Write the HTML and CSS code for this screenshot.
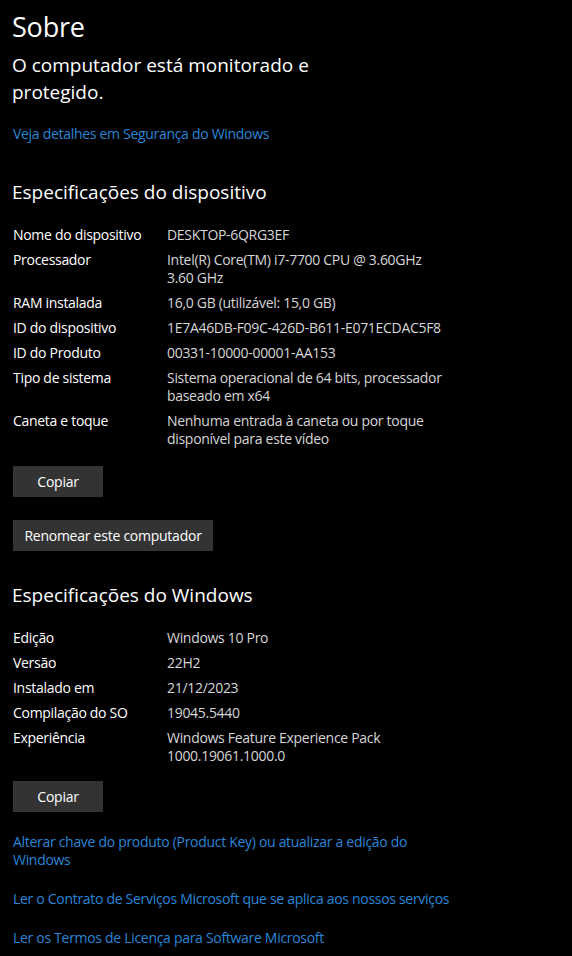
FILE: index.html
```html
<!DOCTYPE html>
<html lang="pt-BR">
<head>
<meta charset="utf-8">
<title>Sobre</title>
<link rel="stylesheet" href="styles.css">
</head>
<body>
<main class="page">
  <h1 class="title">Sobre</h1>
  <p class="status">O computador está monitorado e protegido.</p>
  <a class="link first-link" href="#">Veja detalhes em Segurança do Windows</a>

  <h2 class="section section-device">Especificações do dispositivo</h2>
  <dl class="specs">
    <div class="row"><dt>Nome do dispositivo</dt><dd>DESKTOP-6QRG3EF</dd></div>
    <div class="row"><dt>Processador</dt><dd>Intel(R) Core(TM) i7-7700 CPU @ 3.60GHz<br>3.60 GHz</dd></div>
    <div class="row"><dt>RAM instalada</dt><dd>16,0 GB (utilizável: 15,0 GB)</dd></div>
    <div class="row"><dt>ID do dispositivo</dt><dd>1E7A46DB-F09C-426D-B611-E071ECDAC5F8</dd></div>
    <div class="row"><dt>ID do Produto</dt><dd>00331-10000-00001-AA153</dd></div>
    <div class="row"><dt>Tipo de sistema</dt><dd>Sistema operacional de 64 bits, processador<br>baseado em x64</dd></div>
    <div class="row"><dt>Caneta e toque</dt><dd>Nenhuma entrada à caneta ou por toque<br>disponível para este vídeo</dd></div>
  </dl>
  <button class="btn btn-copy btn-copy-device">Copiar</button>
  <button class="btn btn-rename">Renomear este computador</button>

  <h2 class="section section-windows">Especificações do Windows</h2>
  <dl class="specs">
    <div class="row"><dt>Edição</dt><dd>Windows 10 Pro</dd></div>
    <div class="row"><dt>Versão</dt><dd>22H2</dd></div>
    <div class="row"><dt>Instalado em</dt><dd>21/12/2023</dd></div>
    <div class="row"><dt>Compilação do SO</dt><dd>19045.5440</dd></div>
    <div class="row"><dt>Experiência</dt><dd>Windows Feature Experience Pack<br>1000.19061.1000.0</dd></div>
  </dl>
  <button class="btn btn-copy">Copiar</button>

  <a class="link link-block" href="#">Alterar chave do produto (Product Key) ou atualizar a edição do<br>Windows</a>
  <a class="link link-block" href="#">Ler o Contrato de Serviços Microsoft que se aplica aos nossos serviços</a>
  <a class="link link-block" href="#">Ler os Termos de Licença para Software Microsoft</a>
</main>
</body>
</html>
```

FILE: styles.css
```css
* { box-sizing: border-box; }
html, body {
  margin: 0;
  padding: 0;
  background: #000;
}
body {
  font-family: "Open Sans", "Noto Sans", "Liberation Sans", sans-serif;
  color: #fff;
  font-size: 14px;
}
.page {
  display: flex;
  flex-direction: column;
  align-items: flex-start;
  padding: 9px 0 0 12px;
}
.title {
  margin: 0;
  font-weight: 400;
  font-size: 27px;
  line-height: 36px;
  letter-spacing: -0.2px;
}
.status {
  margin: 7px 0 0 0;
  font-size: 19px;
  line-height: 27px;
  width: 320px;
  letter-spacing: 0;
}
.link {
  color: #2a86d6;
  text-decoration: none;
  font-size: 14px;
  line-height: 18px;
  letter-spacing: -0.3px;
  margin-left: 1px;
}
.first-link {
  margin-top: 19px;
}
.section {
  font-weight: 400;
  font-size: 19px;
  line-height: 26px;
  letter-spacing: 0;
  margin: 0;
}
.section-device { margin-top: 36px; }
.section-windows { margin-top: 31px; }
.specs {
  margin: 21px 0 0 1px;
  display: flex;
  flex-direction: column;
  gap: 7px;
}
.row {
  display: grid;
  grid-template-columns: 154px 1fr;
  line-height: 18px;
  letter-spacing: -0.3px;
}
.row dt { color: #fff; }
.row dd { margin: 0; color: #d6d6d6; }
.btn {
  margin: 0 0 0 1px;
  border: none;
  background: #333;
  color: #fff;
  font-family: inherit;
  font-size: 14px;
  height: 31px;
  padding: 0;
  letter-spacing: -0.25px;
}
.btn-copy {
  width: 90px;
  margin-top: 16px;
}
.btn-copy-device { margin-top: 18px; }
.btn-rename {
  width: 200px;
  margin-top: 23px;
}
.link-block {
  margin-top: 21px;
}
.btn-copy + .link-block { margin-top: 21px; }
```
